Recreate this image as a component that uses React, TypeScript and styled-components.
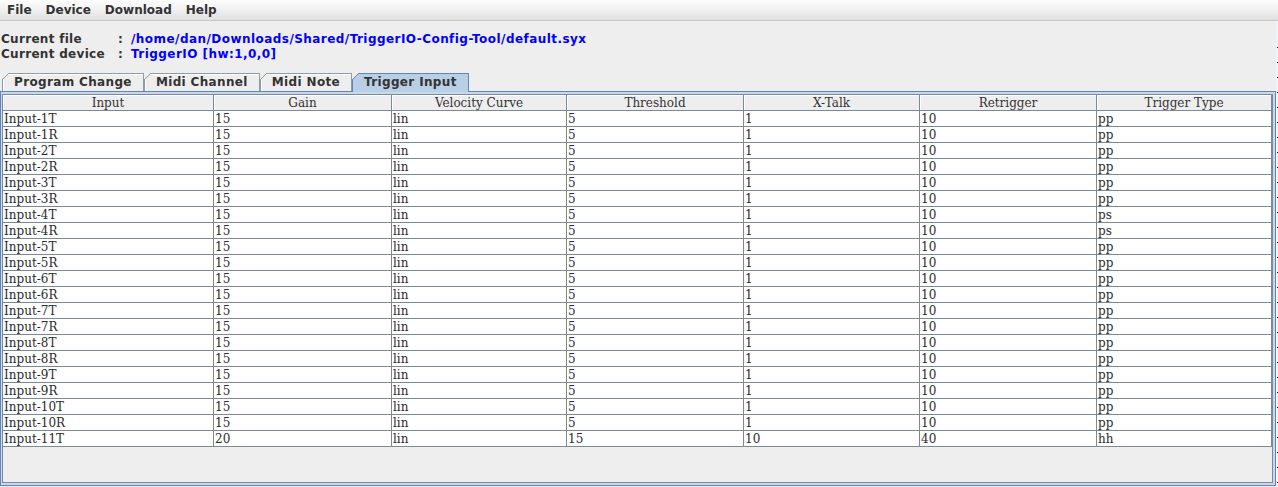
import * as React from 'react';
import styled, { createGlobalStyle } from 'styled-components';

const UI_FONT = `"DejaVu Sans", "Liberation Sans", sans-serif`;
const CELL_FONT = `"DejaVu Serif", "Liberation Serif", serif`;
const GRID = '#7a8a99';
const COLUMNS = '211px 178px 175px 177px 176px 177px 175px';

type Row = {
  input: string;
  gain: string;
  curve: string;
  threshold: string;
  xtalk: string;
  retrigger: string;
  type: string;
};

const headers = ['Input', 'Gain', 'Velocity Curve', 'Threshold', 'X-Talk', 'Retrigger', 'Trigger Type'];

const buildRows = (): Row[] => {
  const list: Row[] = [];
  for (let i = 1; i <= 10; i++) {
    ['T', 'R'].forEach((side) => {
      list.push({
        input: `Input-${i}${side}`,
        gain: '15',
        curve: 'lin',
        threshold: '5',
        xtalk: '1',
        retrigger: '10',
        type: i === 4 ? 'ps' : 'pp',
      });
    });
  }
  list.push({
    input: 'Input-11T',
    gain: '20',
    curve: 'lin',
    threshold: '15',
    xtalk: '10',
    retrigger: '40',
    type: 'hh',
  });
  return list;
};

const rows = buildRows();
const tabs = ['Program Change', 'Midi Channel', 'Midi Note', 'Trigger Input'];
const menus = ['File', 'Device', 'Download', 'Help'];

const App: React.FC = () => {
  const selected = 'Trigger Input';

  return (
    <>
      <GlobalStyle />
      <Window>
        <MenuBar>
          {menus.map((m) => (
            <MenuItem key={m}>{m}</MenuItem>
          ))}
        </MenuBar>
        <Body>
          <Main>
            <InfoPanel>
              <Label>Current file</Label>
              <Colon>:</Colon>
              <Value>/home/dan/Downloads/Shared/TriggerIO-Config-Tool/default.syx</Value>
              <Label>Current device</Label>
              <Colon>:</Colon>
              <Value>TriggerIO [hw:1,0,0]</Value>
            </InfoPanel>
            <TabStrip>
              {tabs.map((t) => (
                <Tab key={t} $active={t === selected}>
                  {t}
                </Tab>
              ))}
            </TabStrip>
            <TabContent>
              <ScrollPane>
                <HeaderRow>
                  {headers.map((h) => (
                    <HeaderCell key={h}>{h}</HeaderCell>
                  ))}
                </HeaderRow>
                {rows.map((r) => (
                  <TableRow key={r.input}>
                    <Cell>{r.input}</Cell>
                    <Cell>{r.gain}</Cell>
                    <Cell>{r.curve}</Cell>
                    <Cell>{r.threshold}</Cell>
                    <Cell>{r.xtalk}</Cell>
                    <Cell>{r.retrigger}</Cell>
                    <Cell>{r.type}</Cell>
                  </TableRow>
                ))}
              </ScrollPane>
            </TabContent>
          </Main>
          <EdgeStrip />
        </Body>
      </Window>
    </>
  );
};

export default App;

const GlobalStyle = createGlobalStyle`
  html, body {
    margin: 0;
    padding: 0;
    background: #eeeeee;
  }

  #root {
    width: 1278px;
    height: 487px;
    overflow: hidden;
  }
`;

const Window = styled.div`
  width: 1278px;
  height: 487px;
  display: flex;
  flex-direction: column;
  background: #eeeeee;
  font-family: ${UI_FONT};
`;

const MenuBar = styled.div`
  height: 20px;
  display: flex;
  align-items: center;
  border-bottom: 1px solid #c6c6c6;
  background: linear-gradient(to bottom, #fdfdfd 0%, #f2f2f2 45%, #e0e0e0 100%);
`;

const MenuItem = styled.span`
  padding: 0 7px;
  font-size: 12px;
  font-weight: bold;
  line-height: 20px;
  color: #333333;
`;

const Body = styled.div`
  flex: 1;
  display: flex;
  min-height: 0;
`;

const Main = styled.div`
  flex: 1;
  display: flex;
  flex-direction: column;
  min-width: 0;
`;

const InfoPanel = styled.div`
  display: grid;
  grid-template-columns: 116px 14px auto;
  grid-auto-rows: 15px;
  padding: 11px 0 0 1px;
  font-size: 12px;
  font-weight: bold;
  line-height: 15px;
  letter-spacing: 0.3px;
`;

const Label = styled.span`
  color: #333333;
  white-space: nowrap;
`;

const Colon = styled.span`
  color: #333333;
  padding-left: 1px;
`;

const Value = styled.span`
  color: #0000ff;
  letter-spacing: 0.45px;
  white-space: nowrap;
`;

const TabStrip = styled.div`
  display: flex;
  align-items: flex-end;
  height: 18px;
  margin-top: 11px;
  padding-left: 2px;
`;

const Tab = styled.div<{ $active: boolean }>`
  position: relative;
  height: ${(p) => (p.$active ? 19 : 18)}px;
  margin-bottom: ${(p) => (p.$active ? -1 : 0)}px;
  z-index: ${(p) => (p.$active ? 1 : 0)};
  box-sizing: border-box;
  padding: 0 11px 0 11px;
  border: 1px solid ${(p) => (p.$active ? '#6382bf' : '#8e9bab')};
  border-bottom: none;
  background: ${(p) => (p.$active ? '#b8cfe5' : '#eeeeee')};
  box-shadow: ${(p) => (p.$active ? 'none' : 'inset 1px 1px 0 #ffffff')};
  color: #333333;
  font-size: 12px;
  font-weight: bold;
  letter-spacing: 0.35px;
  line-height: 17px;
  white-space: nowrap;

  &::before {
    content: '';
    position: absolute;
    top: -1px;
    left: -1px;
    width: 7px;
    height: 7px;
    background: linear-gradient(
      135deg,
      #eeeeee 0,
      #eeeeee calc(50% - 0.7px),
      ${(p) => (p.$active ? '#6382bf' : '#8e9bab')} calc(50% - 0.7px),
      ${(p) => (p.$active ? '#6382bf' : '#8e9bab')} calc(50% + 0.7px),
      transparent calc(50% + 0.7px)
    );
  }
`;

const TabContent = styled.div`
  flex: 1;
  display: flex;
  min-height: 0;
  margin-bottom: 1px;
  padding: 2px 2px 2px 1px;
  border: 1px solid #6382bf;
  background: #c8d9eb;
`;

const ScrollPane = styled.div`
  flex: 1;
  overflow: hidden;
  border: 1px solid ${GRID};
  background: #eeeeee;
`;

const HeaderRow = styled.div`
  display: grid;
  grid-template-columns: ${COLUMNS};
`;

const HeaderCell = styled.div`
  height: 15px;
  border-right: 1px solid ${GRID};
  border-bottom: 1px solid ${GRID};
  background: #eeeeee;
  box-shadow: inset 1px 1px 0 #ffffff;
  color: #333333;
  font-family: ${CELL_FONT};
  font-size: 12px;
  line-height: 16px;
  text-align: center;
  white-space: nowrap;
  overflow: hidden;
`;

const TableRow = styled.div`
  display: grid;
  grid-template-columns: ${COLUMNS};
`;

const Cell = styled.div`
  height: 15px;
  padding-left: 1px;
  border-right: 1px solid ${GRID};
  border-bottom: 1px solid ${GRID};
  background: #ffffff;
  color: #2b2b2b;
  font-family: ${CELL_FONT};
  font-size: 12px;
  line-height: 17px;
  white-space: nowrap;
  overflow: hidden;
`;

const EdgeStrip = styled.div`
  width: 2px;
  background:
    repeating-linear-gradient(to bottom, transparent 0, transparent 14px, #222222 14px, #222222 15px) right 12px / 1px 100% no-repeat,
    #f2f5f8;
`;
